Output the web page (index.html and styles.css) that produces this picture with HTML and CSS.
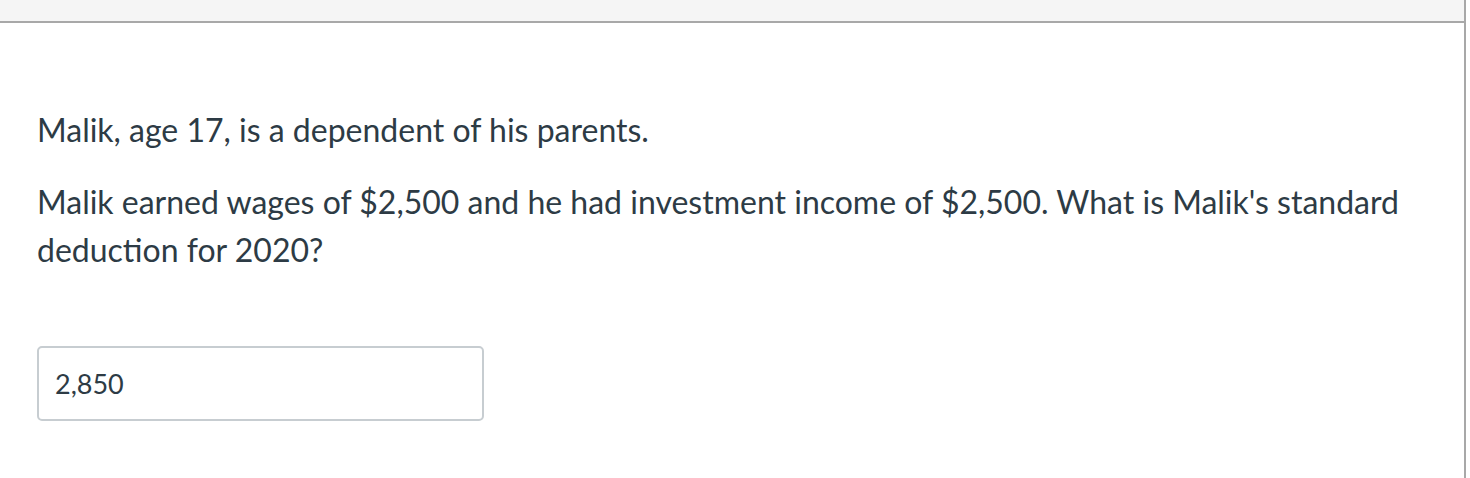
FILE: index.html
```html
<!DOCTYPE html>
<html>
<head>
<meta charset="utf-8">
<link rel="stylesheet" href="styles.css">
</head>
<body>
<div class="question">
  <div class="question-header"></div>
  <div class="question-body">
    <p class="q-text">Malik, age 17, is a dependent of his parents.</p>
    <p class="q-text">Malik earned wages of $2,500 and he had investment income of $2,500. What is Malik's standard deduction for 2020?</p>
    <div class="answer">
      <input class="answer-input" type="text" value="2,850">
    </div>
  </div>
</div>
</body>
</html>
```
FILE: styles.css
```css
html, body {
  margin: 0;
  padding: 0;
  background: #ffffff;
}
body {
  font-family: Lato, "Noto Sans", sans-serif;
  color: #2d3b45;
}
.question {
  width: 1464px;
  height: 478px;
  border-right: 2px solid #a8a8a8;
}
.question-header {
  height: 21px;
  background: #f5f5f5;
  border-bottom: 2px solid #a8a8a8;
}
.question-body {
  padding: 83px 37px 0 37px;
}
.q-text {
  margin: 0 0 24px 0;
  font-size: 32px;
  line-height: 48px;
  max-width: 1390px;
}
.answer {
  padding-top: 48px;
}
.answer-input {
  display: block;
  box-sizing: border-box;
  width: 447px;
  height: 75px;
  border: 2px solid #c7cdd1;
  border-radius: 5px;
  padding: 0 16px;
  font-family: Lato, "Noto Sans", sans-serif;
  font-size: 27px;
  color: #2d3b45;
  background: #fff;
  outline: none;
}
```
